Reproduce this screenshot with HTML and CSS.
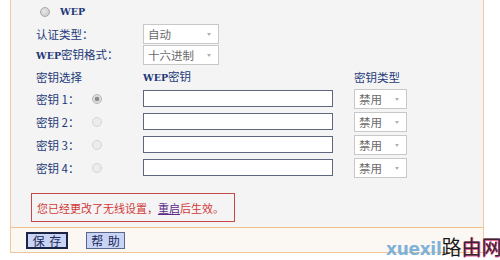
FILE: index.html
```html
<!DOCTYPE html>
<html>
<head>
<meta charset="utf-8">
<link rel="stylesheet" href="styles.css">
</head>
<body>
<div class="panel">
  <div class="content">
    <div class="row row-wep">
      <span class="radio radio-off"></span>
      <span class="wep-label">WEP</span>
    </div>
    <div class="row row-form">
      <span class="label">认证类型：</span>
      <span class="select sel-wide"><span class="sel-text">自动</span><span class="arrow"></span></span>
    </div>
    <div class="row row-form2">
      <span class="label"><span class="latin">WEP</span>密钥格式：</span>
      <span class="select sel-wide"><span class="sel-text">十六进制</span><span class="arrow"></span></span>
    </div>
    <div class="row row-head">
      <span class="label">密钥选择</span>
      <span class="head-key"><span class="latin">WEP</span>密钥</span>
      <span class="head-type">密钥类型</span>
    </div>
    <div class="row row-key">
      <span class="key-label">密钥 1：</span>
      <span class="key-radio"><span class="radio radio-on"></span></span>
      <span class="input"></span>
      <span class="select sel-small"><span class="sel-text">禁用</span><span class="arrow"></span></span>
    </div>
    <div class="row row-key">
      <span class="key-label">密钥 2：</span>
      <span class="key-radio"><span class="radio radio-dis"></span></span>
      <span class="input"></span>
      <span class="select sel-small"><span class="sel-text">禁用</span><span class="arrow"></span></span>
    </div>
    <div class="row row-key">
      <span class="key-label">密钥 3：</span>
      <span class="key-radio"><span class="radio radio-dis"></span></span>
      <span class="input"></span>
      <span class="select sel-small"><span class="sel-text">禁用</span><span class="arrow"></span></span>
    </div>
    <div class="row row-key">
      <span class="key-label">密钥 4：</span>
      <span class="key-radio"><span class="radio radio-dis"></span></span>
      <span class="input"></span>
      <span class="select sel-small"><span class="sel-text">禁用</span><span class="arrow"></span></span>
    </div>
    <div class="notice">您已经更改了无线设置，<span class="link">重启</span>后生效。</div>
  </div>
  <div class="bar">
    <span class="btn btn-focus">保&nbsp;存</span>
    <span class="btn">帮&nbsp;助</span>
  </div>
</div>
<div class="watermark"><span class="wm-en">xuexil</span><span class="wm-cn">路<span class="wm-pink">由网</span></span></div>
</body>
</html>
```

FILE: styles.css
```css
html, body {
  margin: 0;
  padding: 0;
  background: #ffffff;
  font-family: "Noto Sans CJK SC", "DejaVu Sans", sans-serif;
  font-size: 11.5px;
  color: #1e3a78;
}
.panel {
  margin-left: 10px;
  width: 472px;
  border-left: 1px solid #f2c89c;
  border-right: 1px solid #f2c89c;
  position: relative;
}
.content {
  height: 228px;
  box-sizing: border-box;
  background: #f4f4f4;
  border-bottom: 1px solid #efbf8e;
  padding-left: 25px;
}
.row {
  display: flex;
  align-items: center;
  white-space: nowrap;
  line-height: 14px;
}
.row-wep { height: 23px; }
.row-form { height: 21px; }
.row-form2 { height: 22px; }
.row-head { height: 21px; }
.row-key { height: 23px; }
.latin {
  font-family: "DejaVu Serif", serif;
  font-size: 9.5px;
  font-weight: bold;
  letter-spacing: 0;
}
.wep-label {
  font-family: "DejaVu Serif", serif;
  font-size: 9.5px;
  font-weight: bold;
  margin-left: 10px;
}
.radio {
  display: inline-block;
  width: 10px;
  height: 10px;
  box-sizing: border-box;
  border-radius: 50%;
}
.row-wep .radio { margin-left: 4px; }
.radio-off {
  border: 1px solid #a8a8a8;
  background: radial-gradient(circle at 40% 40%, #e8e8e8, #c4c4c4);
}
.radio-on {
  border: 1px solid #b4b4b4;
  background: radial-gradient(circle, #8c8c8c 0, #8c8c8c 2px, #dcdcdc 2.6px, #e8e8e8 100%);
}
.radio-dis {
  border: 1px solid #d4d4d4;
  background: #ececec;
}
.label {
  display: inline-block;
  width: 107px;
}
.select {
  display: inline-flex;
  align-items: center;
  box-sizing: border-box;
  background: #ffffff;
  border: 1px solid #c8c8c8;
  color: #6a6a6a;
  position: relative;
}
.sel-wide { width: 76px; height: 20px; }
.sel-small { width: 53px; height: 20px; margin-left: 21px; }
.sel-text { margin-left: 4px; }
.arrow {
  position: absolute;
  right: 7px;
  top: 8px;
  width: 0;
  height: 0;
  border-left: 2.5px solid transparent;
  border-right: 2.5px solid transparent;
  border-top: 3px solid #b0b0b0;
}
.head-key { display: inline-block; width: 211px; }
.head-type { display: inline-block; }
.key-label { display: inline-block; width: 56px; }
.key-radio { display: inline-block; width: 51px; }
.input {
  display: inline-block;
  width: 190px;
  height: 17px;
  box-sizing: border-box;
  background: #ffffff;
  border: 1px solid #5f6780;
}
.notice {
  margin-top: 14px;
  margin-left: -5px;
  width: 204px;
  height: 29px;
  box-sizing: border-box;
  border: 1px solid #c44a4a;
  color: #d23a3a;
  padding-left: 5px;
  display: flex;
  align-items: center;
  white-space: nowrap;
  font-size: 11px;
}
.link {
  color: #5a2a86;
  text-decoration: underline;
}
.bar {
  height: 25px;
  box-sizing: border-box;
  background: #fbf8f4;
  border-bottom: 1px solid #f0c698;
  padding-left: 15px;
  padding-top: 4px;
  display: flex;
  align-items: flex-start;
  gap: 18px;
}
.btn {
  display: inline-flex;
  align-items: center;
  justify-content: center;
  height: 17px;
  width: 39px;
  box-sizing: border-box;
  background: #c9d3f3;
  border: 1px solid #5a6890;
  color: #1a2a5a;
  font-size: 12px;
  line-height: 12px;
  word-spacing: 2px;
}
.btn-focus {
  width: 42px;
  border: 2px solid #1c2448;
}
.watermark {
  position: absolute;
  left: 386px;
  top: 236px;
  white-space: nowrap;
  font-family: "DejaVu Sans", sans-serif;
  line-height: 22px;
}
.wm-en {
  color: #7fb2d9;
  font-size: 17px;
  font-weight: bold;
  letter-spacing: -0.3px;
}
.wm-cn {
  font-family: "Noto Sans CJK SC", sans-serif;
  font-size: 20px;
  color: #1a1a1a;
}
.wm-pink {
  color: #3a2430;
  text-shadow: 0 1px 0 #e8669a, 1px 0 0 #e8669a;
}
```
